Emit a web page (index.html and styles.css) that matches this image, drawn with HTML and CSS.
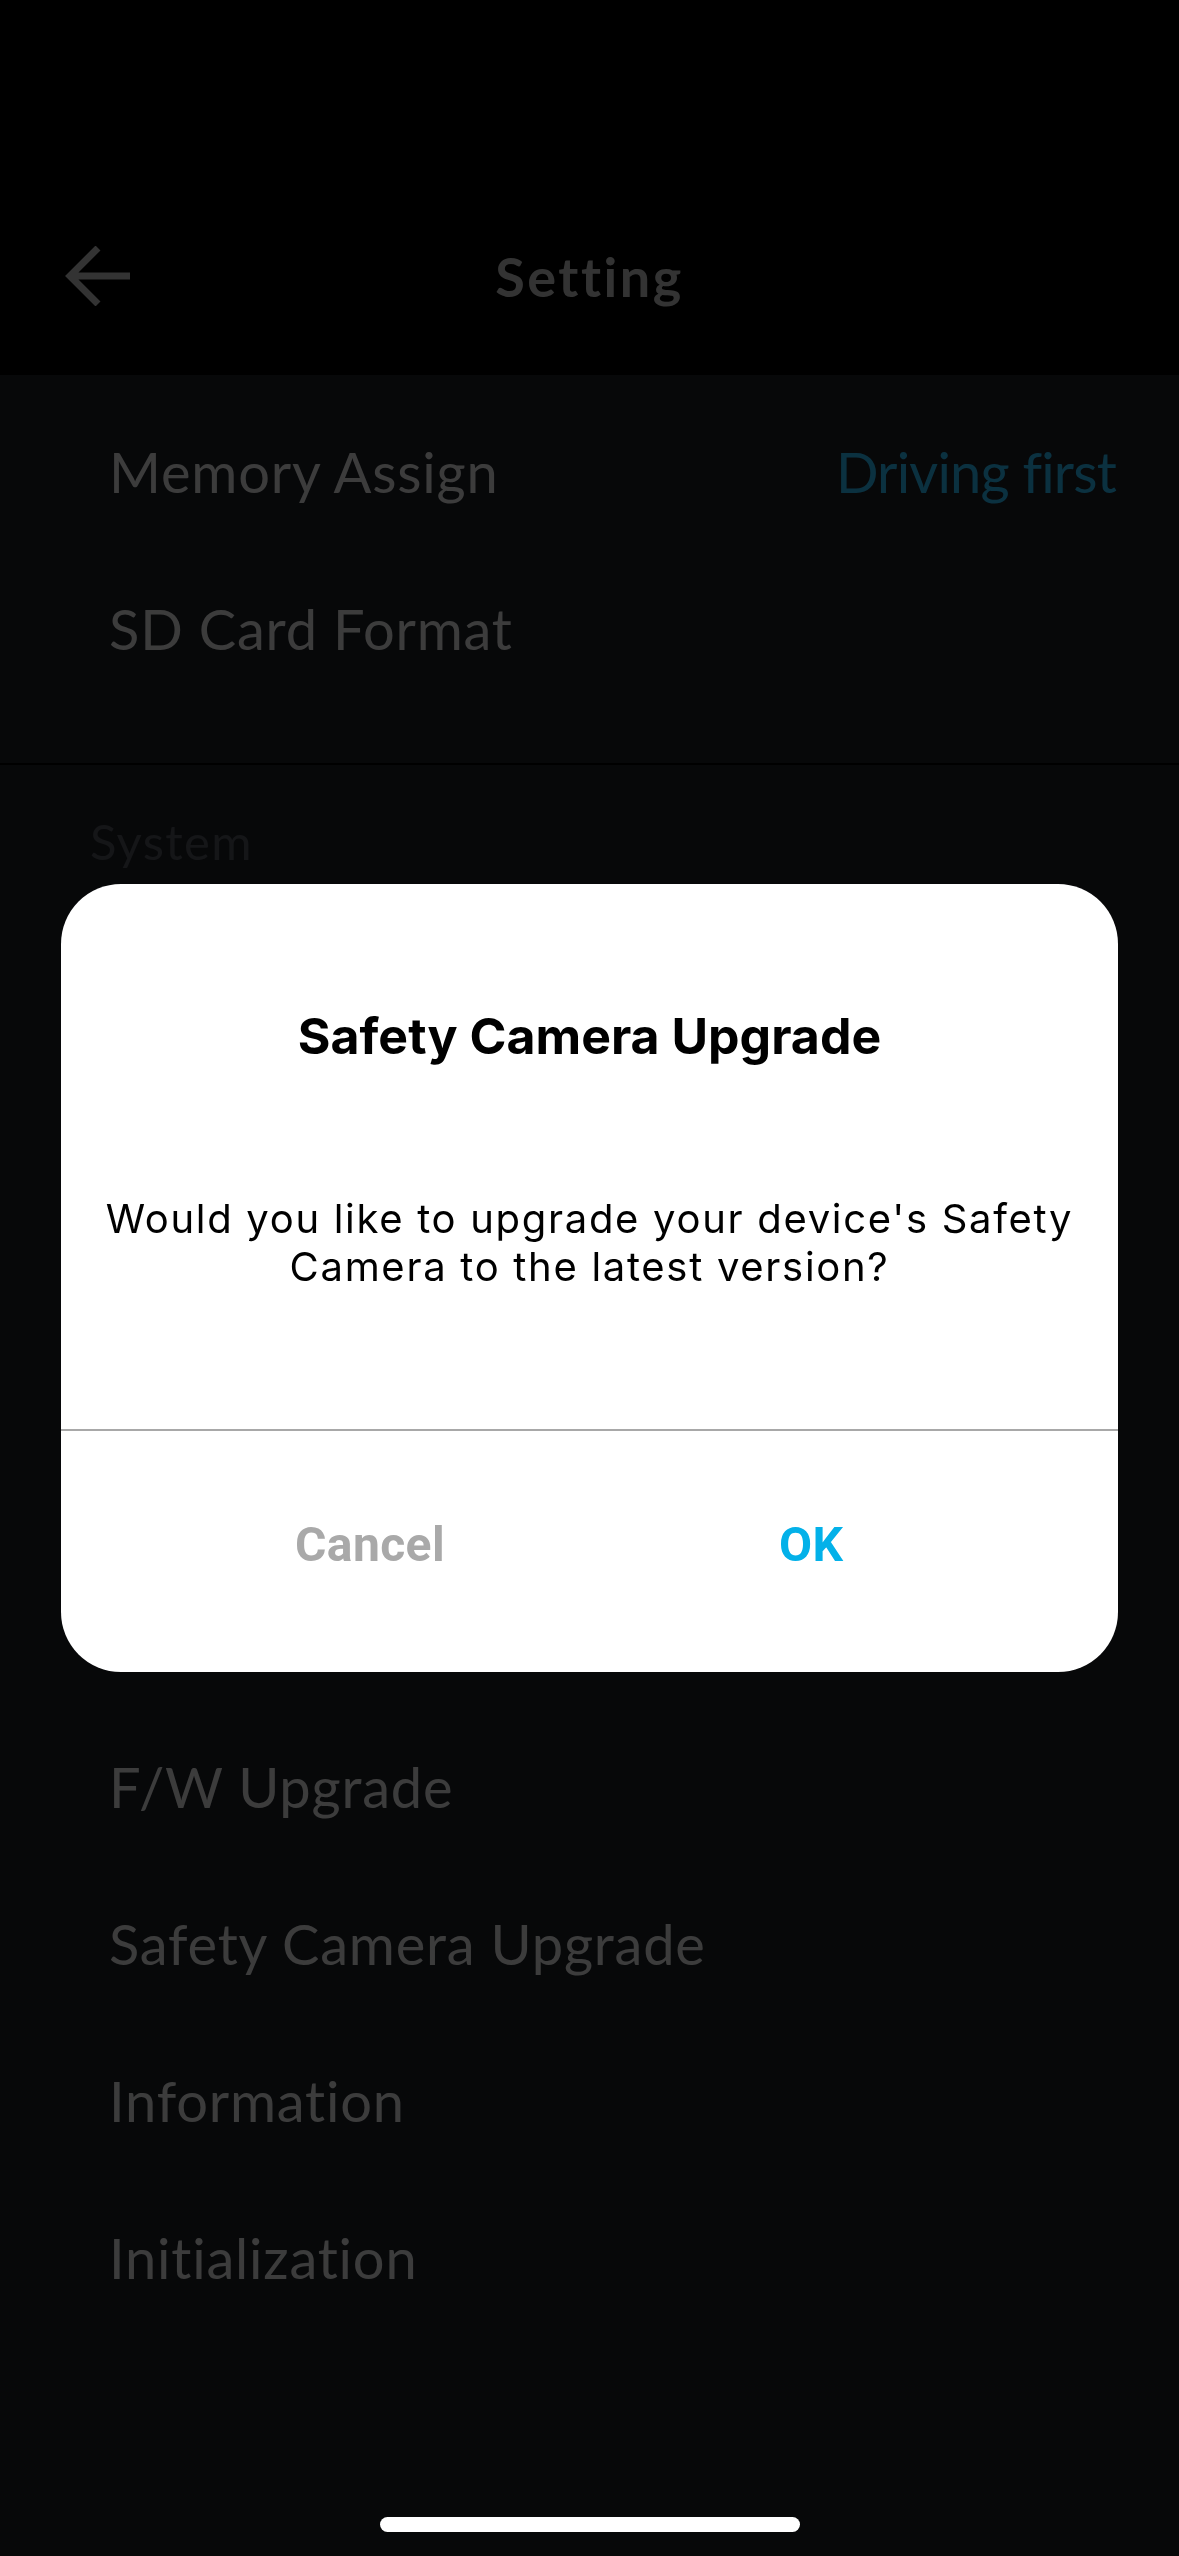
FILE: index.html
```html
<!DOCTYPE html>
<html lang="en">
<head>
<meta charset="utf-8">
<title>Setting</title>
<link rel="stylesheet" href="styles.css">
</head>
<body>
<div class="screen">
  <header class="topbar">
    <div class="bar">
      <div class="bar-left">
        <svg class="back-icon" width="68" height="60" viewBox="0 0 68 60" aria-hidden="true">
          <path d="M66 30 H6 M34 2 L6 30 L34 58" fill="none" stroke="currentColor" stroke-width="7"/>
        </svg>
      </div>
      <h1 class="bar-title">Setting</h1>
      <div class="bar-right"></div>
    </div>
  </header>
  <main class="content">
    <section class="group group-storage">
      <div class="row"><span class="row-label">Memory Assign</span><span class="row-value">Driving first</span></div>
      <div class="row"><span class="row-label">SD Card Format</span></div>
    </section>
    <section class="group group-system">
      <div class="group-title">System</div>
      <div class="row row-empty"></div>
      <div class="row row-empty"></div>
      <div class="row row-empty"></div>
      <div class="row row-empty"></div>
      <div class="row row-empty"></div>
      <div class="row"><span class="row-label">F/W Upgrade</span></div>
      <div class="row"><span class="row-label">Safety Camera Upgrade</span></div>
      <div class="row"><span class="row-label">Information</span></div>
      <div class="row"><span class="row-label">Initialization</span></div>
    </section>
  </main>
</div>

<div class="backdrop">
  <div class="dialog" role="dialog">
    <div class="dialog-body">
      <h2 class="dialog-title">Safety Camera Upgrade</h2>
      <p class="dialog-message">Would you like to upgrade your device's Safety Camera to the latest version?</p>
    </div>
    <div class="dialog-actions">
      <button class="btn btn-cancel">Cancel</button>
      <button class="btn btn-ok">OK</button>
    </div>
  </div>
</div>

<div class="home-indicator"></div>
</body>
</html>
```

FILE: styles.css
```css
* { box-sizing: border-box; }

html, body {
  margin: 0;
  padding: 0;
  background: #181b21;
}

body {
  width: 1179px;
  height: 2556px;
  overflow: hidden;
  font-family: "Lato", "Noto Sans", sans-serif;
}

.screen {
  min-height: 2556px;
  background: #181b21;
}

/* header */
.topbar {
  height: 375px;
  background: #000;
  padding-top: 178px;
}

.bar {
  height: 196px;
  display: grid;
  grid-template-columns: 1fr auto 1fr;
  align-items: center;
}

.bar-left {
  padding-left: 64px;
  display: flex;
  align-items: center;
  color: #aaaaaa;
}

.back-icon { display: block; }

.bar-title {
  margin: 0;
  font-family: "Lato", sans-serif;
  font-weight: 700;
  font-size: 54px;
  letter-spacing: 2.5px;
  color: #aaaaaa;
}

/* list */
.group-storage {
  padding: 18px 0 56px;
  border-bottom: 2px solid #000;
}

.row {
  height: 157px;
  display: flex;
  align-items: center;
  justify-content: space-between;
  padding: 0 63px 0 109px;
}

.row-label {
  font-weight: 400;
  font-size: 56px;
  letter-spacing: 0.8px;
  color: #c8c8c8;
}

.row-value {
  font-weight: 400;
  font-size: 56px;
  letter-spacing: -0.8px;
  color: #26a6d8;
}

.group-title {
  height: 158px;
  display: flex;
  align-items: center;
  padding: 0 0 6px 90px;
  font-weight: 400;
  font-size: 49px;
  letter-spacing: 1.3px;
  color: #474a50;
}

/* modal */
.backdrop {
  position: fixed;
  inset: 0;
  background: rgba(0, 0, 0, 0.7);
  display: flex;
  align-items: center;
  justify-content: center;
}

.dialog {
  width: 1057px;
  height: 788px;
  background: #fff;
  border-radius: 60px;
  display: flex;
  flex-direction: column;
  overflow: hidden;
}

.dialog-body {
  height: 547px;
  padding: 122px 20px 0;
  text-align: center;
  border-bottom: 2px solid #a8a8a8;
}

.dialog-title {
  margin: 0;
  font-family: "Inter", "Roboto", sans-serif;
  font-weight: 700;
  font-size: 50px;
  line-height: 60px;
  color: #000;
}

.dialog-message {
  margin: 129px 0 0;
  font-family: "Inter", "Roboto", sans-serif;
  font-weight: 400;
  font-size: 40px;
  line-height: 48px;
  letter-spacing: 1.7px;
  color: #000;
}

.dialog-actions {
  flex: 1;
  display: flex;
  align-items: center;
  padding: 0 0 14px 234px;
  gap: 334px;
}

.btn {
  border: 0;
  background: none;
  padding: 0;
  font-family: "Roboto", "Liberation Sans", sans-serif;
  font-weight: 700;
  font-size: 48px;
  line-height: 56px;
  letter-spacing: 0.4px;
}

.btn-cancel { color: #a9a9a9; }
.btn-ok { color: #03b1e9; }

.home-indicator {
  position: fixed;
  left: 380px;
  bottom: 24px;
  width: 420px;
  height: 15px;
  border-radius: 8px;
  background: #fff;
}
```
